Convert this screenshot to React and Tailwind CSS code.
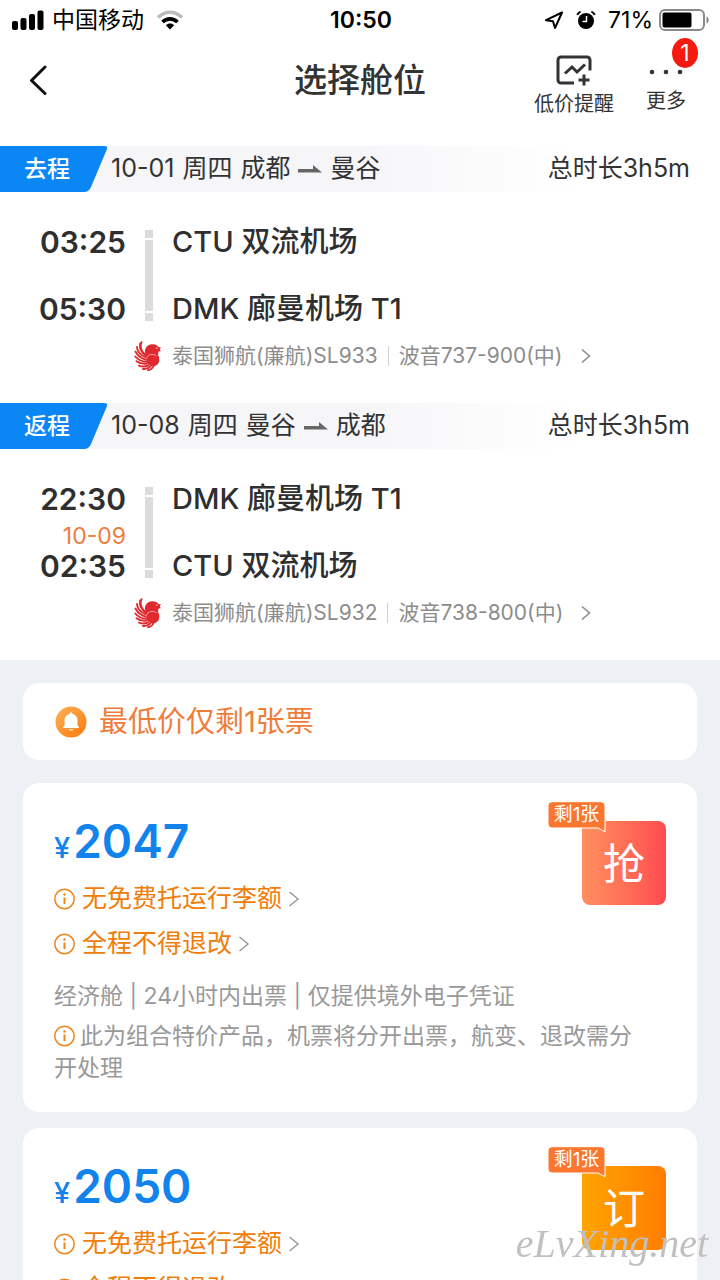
// App.jsx
const segments = [
  {
    tag: "去程",
    date: "10-01",
    weekday: "周四",
    from: "成都",
    to: "曼谷",
    duration: "总时长3h5m",
    depart: "03:25",
    departAirport: "CTU 双流机场",
    nextDay: "",
    arrive: "05:30",
    arriveAirport: "DMK 廊曼机场 T1",
    flight: "泰国狮航(廉航)SL933",
    plane: "波音737-900(中)",
  },
  {
    tag: "返程",
    date: "10-08",
    weekday: "周四",
    from: "曼谷",
    to: "成都",
    duration: "总时长3h5m",
    depart: "22:30",
    departAirport: "DMK 廊曼机场 T1",
    nextDay: "10-09",
    arrive: "02:35",
    arriveAirport: "CTU 双流机场",
    flight: "泰国狮航(廉航)SL932",
    plane: "波音738-800(中)",
  },
];

const fares = [
  {
    price: "2047",
    left: "剩1张",
    action: "抢",
    button: "bg-linear-to-r from-[#ff8f5e] to-[#ff4a50]",
  },
  {
    price: "2050",
    left: "剩1张",
    action: "订",
    button: "bg-linear-to-r from-[#ffa400] to-[#ff7d00]",
  },
];

function StatusBar() {
  return (
    <div className="grid h-10 grid-cols-[1fr_auto_1fr] items-center pl-3 pr-2.5 text-black">
      <div className="flex items-center">
        <svg className="mr-2 h-5 w-8" viewBox="0 0 32 20" fill="currentColor">
          <rect x="0" y="11" width="6" height="9" rx="2" />
          <rect x="8.5" y="8" width="6" height="12" rx="2" />
          <rect x="17" y="4" width="6" height="16" rx="2" />
          <rect x="25.5" y="0.5" width="6" height="19.5" rx="2" />
        </svg>
        <span className="text-[23px] leading-10">中国移动</span>
        <svg className="ml-3 h-5 w-7" viewBox="0 0 28 20" fill="none" strokeWidth="3.6">
          <path d="M2 7.5C9 0.5 19 0.5 26 7.5" stroke="#bdbdbd" />
          <path d="M6.5 12C11 7.8 17 7.8 21.5 12" stroke="#000" />
          <path d="M9.8 15.2c2.5-2.2 5.9-2.2 8.4 0L14 19.4z" fill="#000" />
        </svg>
      </div>
      <div className="text-[23px] font-semibold leading-10">10:50</div>
      <div className="flex items-center justify-end">
        <svg className="mr-3 h-5 w-5" viewBox="0 0 20 20" fill="none" stroke="currentColor" strokeWidth="2" strokeLinejoin="round">
          <path d="M18 2.5 2 10.2l7 1.1 2 6.7z" />
        </svg>
        <svg className="mr-3 h-5 w-5" viewBox="0 0 20 20" fill="none" stroke="currentColor">
          <circle cx="10" cy="11" r="8" fill="currentColor" stroke="none" />
          <path d="M1.2 5C1.8 3.4 3 2.3 4.6 1.6M18.8 5C18.2 3.4 17 2.3 15.4 1.6" strokeWidth="2" />
          <path d="M10.5 6v5.5H6.5" stroke="#fff" strokeWidth="1.5" />
        </svg>
        <span className="mr-1.5 text-[23px] leading-10">71%</span>
        <svg className="h-[22px] w-[51px]" viewBox="0 0 51 22">
          <rect x="1" y="1" width="44" height="20" rx="5" fill="none" stroke="#8a8a8a" strokeWidth="2" />
          <rect x="3.5" y="3.5" width="29" height="15" rx="2" fill="#000" />
          <path d="M47.5 7.5c3 1 3 6 0 7z" fill="#8a8a8a" />
        </svg>
      </div>
    </div>
  );
}

function Header() {
  return (
    <header className="mb-6 grid h-[82px] grid-cols-[1fr_auto_1fr] px-7">
      <button aria-label="返回" className="h-20 w-8 cursor-pointer justify-self-start">
        <svg className="h-[30px] w-5" viewBox="0 0 20 30" fill="none" stroke="#111" strokeWidth="3" strokeLinecap="round" strokeLinejoin="round">
          <path d="M17 2 3.5 15.5 17 28.5" />
        </svg>
      </button>
      <h1 className="text-[33px] font-medium leading-20 text-[#333]">选择舱位</h1>
      <div className="flex gap-8 justify-self-end pr-1.5 pt-3.5 text-[#333]">
        <button className="flex cursor-pointer flex-col items-center">
          <svg className="h-8 w-9" viewBox="0 0 36 32" fill="none" stroke="currentColor" strokeWidth="3">
            <path d="M18 29H5a3 3 0 0 1-3-3V6a3 3 0 0 1 3-3h26a3 3 0 0 1 3 3v10.5" />
            <path d="M9 19.5 16 13l5 5 8-7.5" />
            <path d="M28 20.5v11M22.5 26h11" />
          </svg>
          <span className="mt-1 text-[20px] leading-7">低价提醒</span>
        </button>
        <button className="relative flex cursor-pointer flex-col items-center">
          <svg className="mt-3 h-[11px] w-9" viewBox="0 0 36 11" fill="currentColor">
            <circle cx="4" cy="6" r="2.3" />
            <circle cx="18" cy="6" r="2.3" />
            <circle cx="32" cy="6" r="2.3" />
          </svg>
          <span className="mt-2.5 text-[20px] leading-7">更多</span>
          <span className="absolute -right-3 -top-4 flex h-[30px] w-[26px] items-center justify-center rounded-[50%] bg-[#f5190f] text-[23px] text-white">
            1
          </span>
        </button>
      </div>
    </header>
  );
}

function AirlineLogo() {
  return (
    <svg className="h-[30px] w-7" viewBox="0 0 28 30" fill="none">
      <g stroke="#e0282e" strokeWidth="1.9" strokeLinecap="round">
        <path d="M7.5 1.2C5.500 6 7 10 11 13.500" />
        <path d="M6.2 2.500C5.200 7 7 10.500 11 14" />
        <path d="M3 6C3.200 10.500 6.500 14 11.500 16.200" />
        <path d="M1.500 10.500C3.500 14.500 7 17.200 11.800 18.600" />
        <path d="M1.300 15.500C4 18.800 8 20.500 12.300 20.800" />
        <path d="M2.500 20.200C5.500 22.500 9.500 23 13 22.600" />
        <path d="M5 24.600C8 25.900 11.500 25.700 14.500 24.300" />
        <path d="M9 28C12 28.300 14.500 27.400 16.500 25.300" />
        <path d="M14 29.200C16.500 29 18.500 27.500 19.500 25" />
      </g>
      <path
        d="M11 11c-.5-4 2.500-7.500 7-7.800 3-.2 5 .8 6.500 2.800l2.500.5-1.200 1.700 1 2-2.300.3-.5 3.500c2.500 4 1.500 9.500-3 11-4 1-7.500-1-8.500-5z"
        fill="#e0282e"
      />
      <path d="M12.500 17.500c1-4 6.500-5.500 10-2.500" stroke="#fff" strokeWidth=".8" opacity=".7" />
      <path d="M22 7.200h1.500" stroke="#fff" strokeWidth=".8" />
    </svg>
  );
}

function Segment({ segment }) {
  return (
    <section className="pb-8">
      <div className="flex h-[46px] items-center bg-linear-to-r from-[#f6f6f9] from-50% to-white to-80% pr-[30px] text-[25px] text-[#333]">
        <div className="relative mr-1 h-full w-[107px]">
          <svg className="absolute inset-0 h-full w-full" viewBox="0 0 107 46" preserveAspectRatio="none">
            <path d="M0 0h104q4 0 3 3L91 41q-2 5-7 5H0z" fill="#0a86f5" />
          </svg>
          <span className="relative block pl-6 text-[23px] font-medium leading-[46px] text-white">{segment.tag}</span>
        </div>
        <h2 className="flex flex-1 items-center gap-2">
          <span>{segment.date}</span>
          <span>{segment.weekday}</span>
          <span>{segment.from}</span>
          <svg className="h-2 w-6" viewBox="0 0 24 8" fill="#666">
            <path d="M0 4h15V0l9 7.5H0z" />
          </svg>
          <span>{segment.to}</span>
        </h2>
        <span>{segment.duration}</span>
      </div>

      <div className="flex pt-[30px] text-[29px] font-medium leading-10 text-[#2f2f2f]">
        <div className="mr-[19px] w-[126px] text-right text-[30px] font-semibold">
          <div>{segment.depart}</div>
          <div className="flex h-[27px] items-end justify-end text-[23px] font-normal leading-5 text-[#ee7d3b]">
            {segment.nextDay}
          </div>
          <div>{segment.arrive}</div>
        </div>
        <div className="mr-[19px] flex w-2 flex-col gap-0.5 py-2">
          <div className="h-2 bg-[#dcdcdc]" />
          <div className="flex-1 bg-[#dcdcdc]" />
          <div className="h-2 bg-[#dcdcdc]" />
        </div>
        <div className="flex flex-col justify-between">
          <div>{segment.departAirport}</div>
          <div>{segment.arriveAirport}</div>
        </div>
      </div>

      <a href="#flight" className="ml-[134px] mt-3 flex h-[30px] items-center text-[21px] text-[#8c8c8c]">
        <AirlineLogo />
        <span className="ml-2.5">{segment.flight}</span>
        <span className="mx-2.5 h-5 w-px bg-[#d0d0d0]" />
        <span>{segment.plane}</span>
        <svg className="ml-[18px] h-4 w-2.5" viewBox="0 0 10 16" fill="none" stroke="currentColor" strokeWidth="1.6">
          <path d="M1 1.5 8.5 8 1 14.5" />
        </svg>
      </a>
    </section>
  );
}

function InfoIcon() {
  return (
    <svg className="mr-1 inline-block h-[22px] w-[22px] align-[-3px]" viewBox="0 0 22 22" fill="none" stroke="#f08519" strokeWidth="1.5">
      <circle cx="10.500" cy="11" r="9.700" />
      <path d="M10.500 9.500v6.500" strokeWidth="2" />
      <circle cx="10.500" cy="6.500" r="1.200" fill="#f08519" stroke="none" />
    </svg>
  );
}

function InfoLink({ children }) {
  return (
    <a href="#rules" className="flex h-[45px] items-center text-[25px] text-[#f07d0a]">
      <InfoIcon />
      <span className="ml-0.5">{children}</span>
      <svg className="ml-1.5 h-4 w-3" viewBox="0 0 12 16" fill="none" stroke="#999" strokeWidth="1.5">
        <path d="M1.5 1 10 8l-8.5 7" />
      </svg>
    </a>
  );
}

function FareCard({ fare }) {
  return (
    <section className="rounded-2xl bg-white px-[31px] pb-7 pt-7">
      <div className="flex justify-between">
        <div>
          <div className="mb-[5px] flex items-baseline gap-[3px] text-[#1283ec]">
            <span className="text-[29px] font-medium">¥</span>
            <span className="text-[46px] font-semibold leading-[60px]">{fare.price}</span>
          </div>
          <InfoLink>无免费托运行李额</InfoLink>
          <InfoLink>全程不得退改</InfoLink>
        </div>
        <div className="relative mt-2.5 h-[84px]">
          <button className={`h-[84px] w-[84px] cursor-pointer rounded-lg text-[42px] text-white ${fare.button}`}>
            {fare.action}
          </button>
          <div className="absolute -left-[35px] -top-5">
            <svg className="absolute inset-0 h-8 w-[59px]" viewBox="0 0 59 32">
              <path
                d="M5 .7h49q4 0 4 4v26L51 27H5q-4 0-4-4V4.700q0-4 4-4z"
                fill="#fb762f"
                stroke="#fff"
                strokeWidth="1"
              />
            </svg>
            <span className="relative block w-[59px] text-center text-[19px] leading-7 text-white">{fare.left}</span>
          </div>
        </div>
      </div>
      <p className="mt-2.5 text-[23px] leading-10 text-[#999]">经济舱 | 24小时内出票 | 仅提供境外电子凭证</p>
      <p className="mt-1 pr-4 text-[23px] leading-8 text-[#999]">
        <InfoIcon />
        此为组合特价产品，机票将分开出票，航变、退改需分开处理
      </p>
    </section>
  );
}

export default function App() {
  return (
    <div className="min-h-screen bg-[#edf0f5] font-[Inter,'Noto_Sans_CJK_SC',sans-serif]">
      <div className="bg-white">
        <StatusBar />
        <Header />
        {segments.map((segment) => (
          <Segment key={segment.tag} segment={segment} />
        ))}
      </div>

      <main className="flex flex-col gap-4 px-[23px] py-[23px]">
        {/* Low stock notice */}
        <div className="mb-[7px] flex h-[77px] items-center rounded-2xl bg-white px-8 text-[29px] text-[#ee7d3b]">
          <svg className="mr-3 h-8 w-8" viewBox="0 0 32 32">
            <defs>
              <linearGradient id="bell" x1="0" y1="0" x2="1" y2="1">
                <stop offset="0" stopColor="#fbb25c" />
                <stop offset="1" stopColor="#fb7a0a" />
              </linearGradient>
            </defs>
            <circle cx="16" cy="16" r="15.5" fill="url(#bell)" />
            <path
              d="M16 6.500c.9 0 1.500.6 1.600 1.500 3 .7 4.900 3 4.900 6v5.500l1.500 1.700V22H8v-.8l1.500-1.700V14c0-3 1.900-5.300 4.900-6 .1-.9.700-1.500 1.600-1.500zM13.500 23.300h5c-.6 1.600-4.400 1.600-5 0z"
              fill="#fff"
            />
          </svg>
          最低价仅剩1张票
        </div>

        {fares.map((fare) => (
          <FareCard key={fare.price} fare={fare} />
        ))}
      </main>

      {/* Site watermark */}
      <div className="pointer-events-none fixed bottom-3 right-3 font-['Liberation_Serif',serif] text-[40px] italic leading-12 text-[#c0c0c0]">
        eLvXing.net
      </div>
    </div>
  );
}
